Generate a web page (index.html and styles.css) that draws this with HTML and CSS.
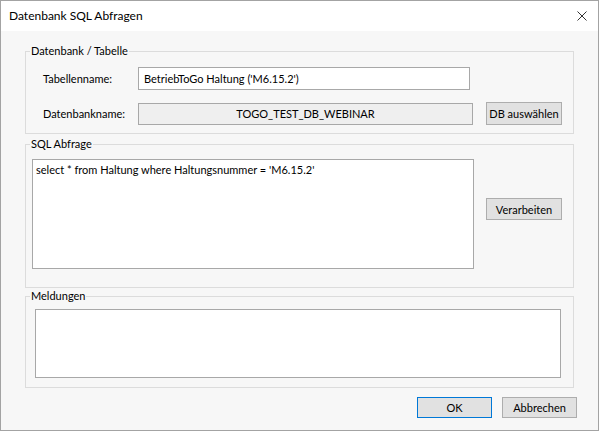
FILE: index.html
```html
<!DOCTYPE html>
<html>
<head>
  <title>Datenbank SQL Abfragen</title>
  <meta charset="UTF-8">
  <meta name="viewport" content="width=device-width, initial-scale=1.0">
  <link rel="stylesheet" href="styles.css">
</head>
<body>
  <div class="window">
    <div class="titlebar">
      <span class="title">Datenbank SQL Abfragen</span>
      <svg class="close" width="10" height="10" viewBox="0 0 10 10">
        <path d="M0.5 0.5 L9.5 9.5 M9.5 0.5 L0.5 9.5" stroke="#333" stroke-width="1" fill="none"/>
      </svg>
    </div>
    <div class="content">
      <fieldset class="group group-db">
        <legend>Datenbank / Tabelle</legend>
        <div class="group-body">
          <div class="row">
            <label class="label" for="table-name">Tabellenname:</label>
            <input type="text" id="table-name" class="field field-table" value="BetriebToGo Haltung ('M6.15.2')">
          </div>
          <div class="row">
            <label class="label">Datenbankname:</label>
            <div class="field field-db">TOGO_TEST_DB_WEBINAR</div>
            <button class="btn btn-db">DB auswählen</button>
          </div>
        </div>
      </fieldset>

      <fieldset class="group group-sql">
        <legend>SQL Abfrage</legend>
        <div class="group-body sql-body">
          <textarea class="sql-text">select * from Haltung where Haltungsnummer = 'M6.15.2'</textarea>
          <button class="btn btn-run">Verarbeiten</button>
        </div>
      </fieldset>

      <fieldset class="group group-msg">
        <legend>Meldungen</legend>
        <div class="group-body msg-body">
          <div class="messages"></div>
        </div>
      </fieldset>

      <div class="actions">
        <button class="btn btn-ok">OK</button>
        <button class="btn">Abbrechen</button>
      </div>
    </div>
  </div>
</body>
</html>
```

FILE: styles.css
```css
body {
  margin: 0;
  background: #fff;
  font-family: Lato, "Noto Sans", sans-serif;
  font-size: 11px;
  color: #000;
}

.window {
  width: 599px;
  height: 431px;
  box-sizing: border-box;
  border: 1px solid #a3a3a3;
  display: flex;
  flex-direction: column;
  background: #f7f7f7;
}

.titlebar {
  flex: none;
  height: 30px;
  background: #fff;
  display: flex;
  align-items: center;
  justify-content: space-between;
  padding: 0 11px 0 8px;
}

.title {
  font-size: 12px;
  line-height: 16px;
}

.content {
  flex: 1;
  padding: 12px 24px 0 24px;
}

.group {
  margin: 0;
  padding: 0;
  min-width: 0;
  border: 1px solid #dcdcdc;
}

.group legend {
  margin-left: 4px;
  padding: 0 1px;
  line-height: 16px;
}

.group-sql {
  margin-top: 2px;
}

/* Datenbank / Tabelle */
.group-db .group-body {
  padding: 8px 0 8px 17px;
  display: flex;
  flex-direction: column;
  gap: 12px;
}

.row {
  display: flex;
  align-items: center;
}

.label {
  flex: none;
  width: 95px;
  white-space: nowrap;
}

.field {
  flex: none;
  box-sizing: border-box;
  border: 1px solid #a8a8a8;
  font: inherit;
  color: #000;
  margin: 0;
}

.field-table {
  width: 332px;
  height: 23px;
  padding: 0 5px;
  background: #fff;
  outline: none;
}

.field-db {
  width: 335px;
  height: 22px;
  line-height: 20px;
  text-align: center;
  background: #efefef;
  margin-right: 13px;
}

.btn {
  flex: none;
  box-sizing: border-box;
  width: 75px;
  height: 21px;
  padding: 0;
  margin: 0;
  font: inherit;
  color: #000;
  white-space: nowrap;
  background: #e1e1e1;
  border: 1px solid #adadad;
}

.btn-db {
  width: 76px;
  height: 23px;
}

/* SQL Abfrage */
.sql-body {
  padding: 7px 0 18px 6px;
  display: flex;
  align-items: flex-start;
}

.sql-text {
  flex: none;
  box-sizing: border-box;
  width: 442px;
  height: 110px;
  margin: 0;
  padding: 2px 3px;
  border: 1px solid #a8a8a8;
  background: #fff;
  font: inherit;
  line-height: 16px;
  color: #000;
  resize: none;
  outline: none;
}

.btn-run {
  width: 76px;
  height: 22px;
  margin: 39px 0 0 12px;
}

/* Meldungen */
.msg-body {
  padding: 5px 0 9px 9px;
}

.messages {
  box-sizing: border-box;
  width: 526px;
  height: 69px;
  border: 1px solid #a8a8a8;
  background: #fff;
}

.actions {
  display: flex;
  justify-content: flex-end;
  gap: 10px;
  margin: 9px -3px 0 0;
}

.btn-ok {
  border-color: #0078d7;
}
```
